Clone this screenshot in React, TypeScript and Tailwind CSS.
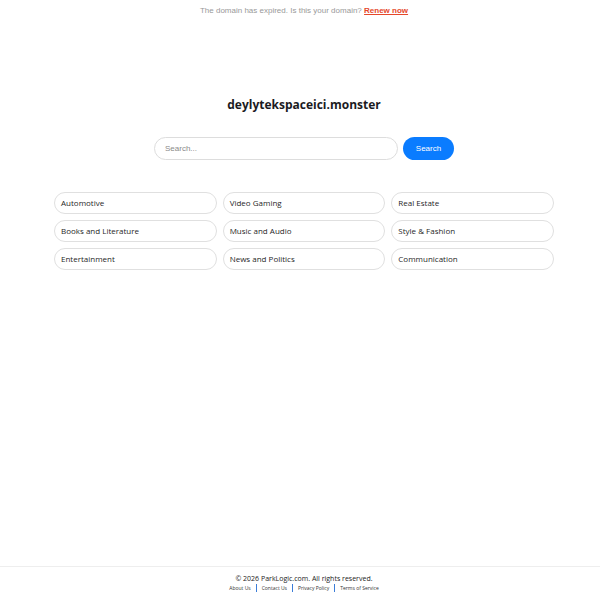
import React from 'react';

const categories = [
  'Automotive',
  'Video Gaming',
  'Real Estate',
  'Books and Literature',
  'Music and Audio',
  'Style & Fashion',
  'Entertainment',
  'News and Politics',
  'Communication',
];

const links = ['About Us', 'Contact Us', 'Privacy Policy', 'Terms of Service'];

export default function App() {
  return (
    <div className="min-h-screen flex flex-col bg-white" style={{ fontFamily: '"Open Sans", sans-serif' }}>
      {/* Expired notice */}
      <div className="pt-[5px] pl-[8px] text-center text-[8px] leading-[12px] text-[#999999] font-['Liberation_Sans',Arial,sans-serif]">
        The domain has expired. Is this your domain?{' '}
        <a href="#" className="font-bold text-[#e5482b] underline">Renew now</a>
      </div>

      {/* Main */}
      <div className="flex-1 flex flex-col items-center pl-[8px]">
        <h1 className="mt-[79px] text-[12px] leading-[18px] font-bold text-[#1b1b1f]">deylytekspaceici.monster</h1>

        <div className="mt-[23px] flex items-center gap-[5px]">
          <input
            type="text"
            placeholder="Search..."
            className="w-[244px] h-[23px] rounded-full border border-[#dddddd] px-[10px] text-[8px] font-['Liberation_Sans',Arial,sans-serif] placeholder:text-[#8a8a8a] outline-none"
          />
          <button className="w-[51px] h-[23px] rounded-full bg-[#0a7cff] text-white text-[8px] font-['Liberation_Sans',Arial,sans-serif]">
            Search
          </button>
        </div>

        <div className="mt-[32px] w-[500px] grid grid-cols-3 gap-[6px]">
          {categories.map((c) => (
            <a
              key={c}
              href="#"
              className="h-[22px] flex items-center rounded-full border border-[#e0e0e0] px-[6px] text-[8px] text-[#1f1f1f]"
            >
              {c}
            </a>
          ))}
        </div>
      </div>

      {/* Footer */}
      <div className="border-t border-[#eeeeee] pt-[7px] pb-[8px] pl-[8px] text-center">
        <p className="text-[7px] leading-[10px] text-[#222222]">© 2026 ParkLogic.com. All rights reserved.</p>
        <div className="flex justify-center items-center text-[5px] leading-[8px] text-[#333333]">
          {links.map((l, i) => (
            <React.Fragment key={l}>
              {i > 0 && <span className="mx-[5px] w-px h-[8px] bg-[#3b7dd8]" />}
              <a href="#">{l}</a>
            </React.Fragment>
          ))}
        </div>
      </div>
    </div>
  );
}
